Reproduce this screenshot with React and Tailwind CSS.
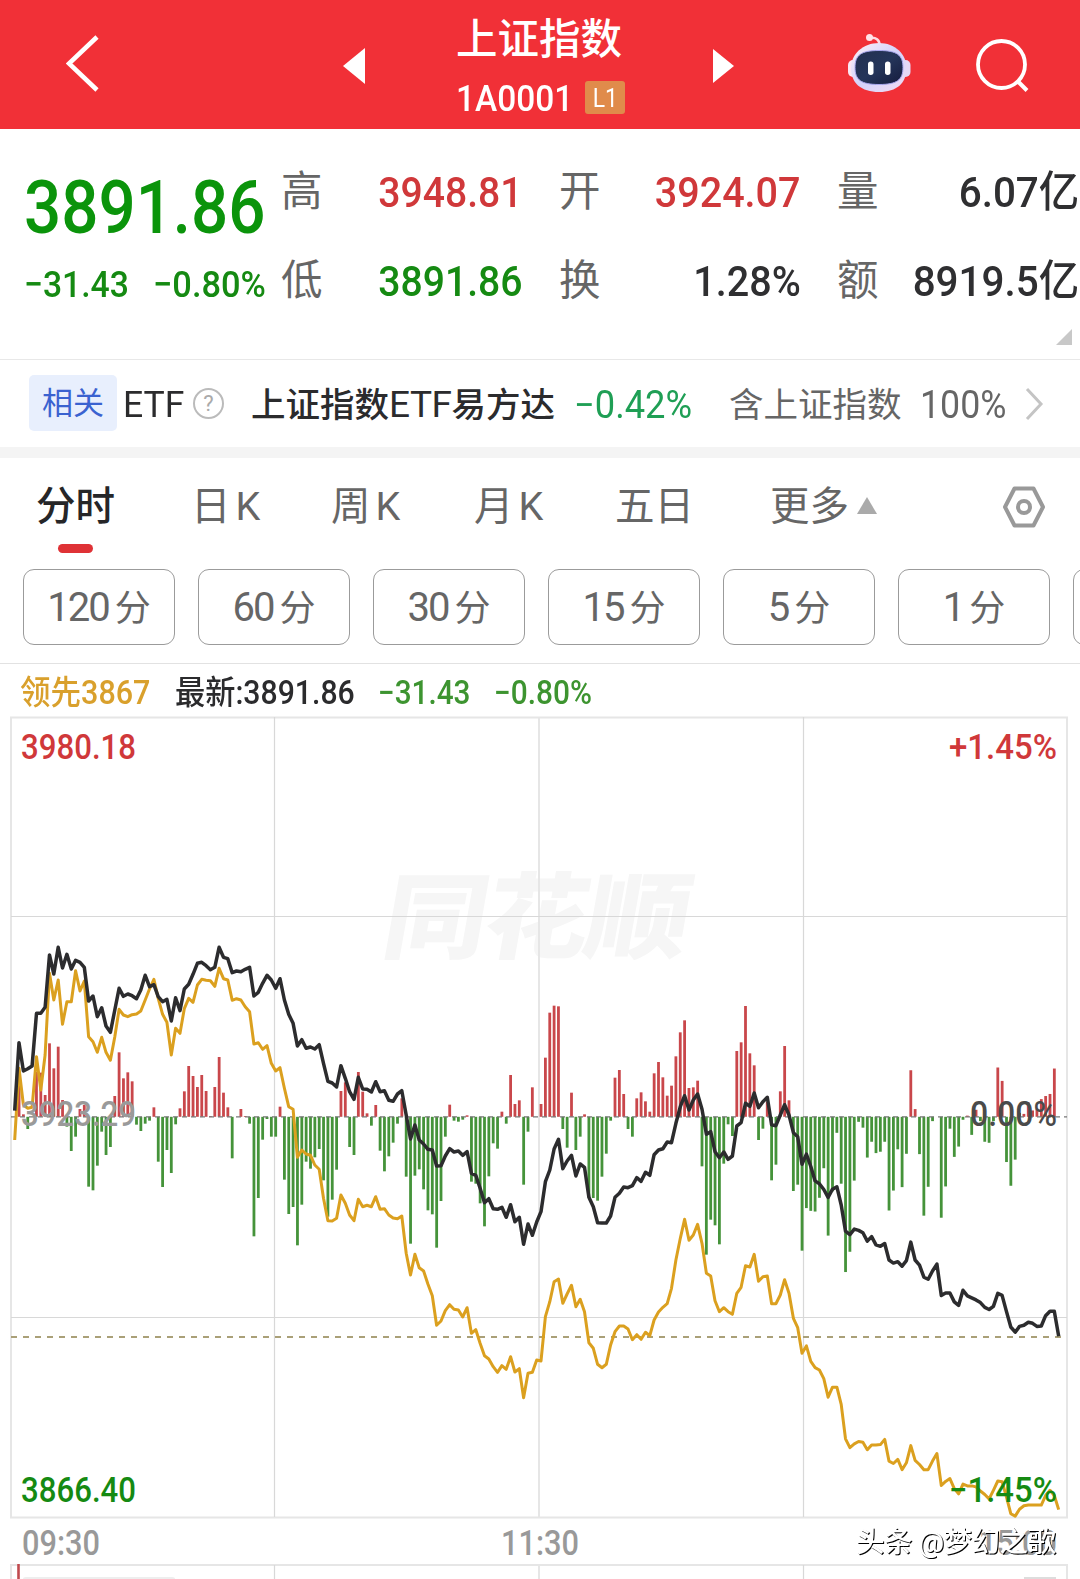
import { useState } from "react";
import clsx from "clsx";

const STEP = 4.35;
const START_X = 14.7;
const ZERO_Y = 1116.8;

// every session block keeps its own origin and resolution
const price = [
  {
    top: 920,
    scale: 3,
    values: [
      572, 368, 453, 446, 438, 280, 280, 262, 105, 162, 82, 144, 103, 147, 121,
      127, 142, 243, 228, 290, 263, 318, 337, 270, 205, 229, 222, 227, 236, 210,
      166, 200, 194, 230, 245, 238, 303, 233, 272, 207, 193, 163, 130, 127, 137,
      149, 142, 82, 112, 116, 158, 153, 155, 148, 142, 228, 217, 190, 166, 180,
      205, 176, 240, 283, 310, 378, 359, 385, 381, 387, 374, 430, 484, 489, 501,
      437, 475, 515, 538, 472, 507, 508, 516, 485, 515, 512, 541, 544, 522, 512,
      585, 657, 615, 660, 672, 688, 690, 738, 737, 708, 686, 696, 693, 706, 695,
      760, 766, 805, 848, 836, 866, 868, 862, 892, 854, 905, 892, 973, 912, 946,
      906,
    ],
  },
  {
    top: 980,
    scale: 3,
    values: [
      695, 605, 570, 507, 478, 566, 543, 526, 588, 552, 562, 652, 680, 728, 729,
      729, 708, 652, 640, 621, 623, 617, 593, 604, 577, 586, 524, 510, 506, 486,
      488, 430, 380, 347, 390, 360, 342, 388, 463, 455, 515, 533, 516, 538, 528,
      438, 428, 370, 379, 339, 383, 365, 352, 434, 437, 405, 374, 405, 458, 470,
      553,
    ],
  },
  {
    top: 1040,
    scale: 2.909,
    values: [
      332, 368, 410, 418, 435, 458, 434, 427, 480, 556, 566, 550, 554, 561, 585,
      572, 596, 600, 592, 640, 649, 645, 658, 642, 588, 640, 655, 690, 696, 672,
      652, 743, 736, 736, 762, 772, 728, 744, 750, 756, 764, 778, 784, 775, 737,
      743, 790, 835, 850, 833, 830, 821, 824, 833, 832, 802, 789, 789, 862,
    ],
  },
];

const leading = [
  {
    top: 920,
    scale: 3,
    values: [
      660, 445, 555, 565, 562, 410, 510, 405, 160, 240, 180, 313, 245, 245, 152,
      213, 183, 350, 365, 397, 352, 397, 421, 350, 268, 285, 290, 284, 282, 273,
      240, 207, 178, 235, 283, 307, 405, 325, 340, 266, 235, 247, 195, 178, 181,
      182, 199, 145, 176, 180, 241, 236, 240, 260, 275, 372, 368, 388, 377, 430,
      453, 443, 505, 560, 568, 712, 690, 702, 706, 735, 748, 835, 902, 903, 895,
      825, 850, 885, 902, 838, 860, 856, 860, 830, 868, 866, 885, 894, 896, 888,
      1000, 1065, 1003, 1043, 1053, 1092, 1127, 1216, 1203, 1172, 1154, 1168,
      1170, 1191, 1163, 1240, 1229, 1270, 1307, 1317, 1340, 1357, 1337, 1348,
      1310, 1356, 1346, 1433, 1360, 1357, 1320,
    ],
  },
  {
    top: 980,
    scale: 3,
    values: [
      1143, 1010, 965, 905, 897, 970, 942, 916, 980, 958, 995, 1088, 1105, 1153,
      1163, 1153, 1095, 1055, 1038, 1038, 1047, 1079, 1064, 1078, 1057, 1067,
      1020, 996, 982, 971, 925, 840, 775, 718, 781, 765, 733, 790, 880, 888, 962,
      995, 983, 995, 1003, 940, 922, 857, 861, 823, 904, 890, 888, 971, 971, 945,
      899, 940, 1015, 1043, 1120,
    ],
  },
  {
    top: 1040,
    scale: 2.909,
    values: [
      890, 935, 953, 960, 985, 1039, 1010, 1010, 1060, 1160, 1186, 1175, 1168,
      1170, 1192, 1178, 1178, 1177, 1162, 1225, 1232, 1220, 1250, 1230, 1180,
      1223, 1235, 1250, 1250, 1225, 1203, 1296, 1284, 1276, 1305, 1320, 1292,
      1297, 1297, 1300, 1312, 1322, 1335, 1310, 1283, 1285, 1330, 1378, 1385,
      1365, 1355, 1353, 1353, 1353, 1353, 1325, 1310, 1325, 1366,
    ],
  },
];

const momentum = [
  {
    top: 920,
    scale: 3,
    values: [
      590, 480, 583, 627, 590, 455, 458, 525, 370, 445, 380, 540, 620, 693, 650,
      567, 555, 800, 811, 737, 635, 705, 681, 528, 397, 475, 457, 484, 614, 633,
      611, 602, 562, 725, 801, 690, 759, 613, 565, 514, 438, 468, 501, 465, 513,
      588, 501, 411, 518, 562, 715, 590, 567, 588, 611, 949, 834, 659, 597, 650,
      650, 560, 779, 882, 861, 976, 854, 725, 746, 712, 687, 781, 890, 839, 749,
      513, 487, 681, 705, 456, 515, 580, 617, 555, 692, 754, 709, 668, 611, 535,
      770, 971, 767, 748, 808, 871, 883, 983, 843, 650, 554, 602, 605, 599, 586,
      785, 791, 850, 919, 769, 670, 686, 575, 611, 465, 552, 541, 794, 635, 502,
      590,
    ],
  },
  {
    top: 980,
    scale: 3,
    values: [
      372, 233, 98, 77, 79, 447, 503, 338, 510, 470, 403, 653, 654, 662, 590,
      521, 422, 293, 270, 342, 447, 470, 355, 337, 364, 395, 280, 246, 292, 347,
      317, 229, 157, 121, 324, 322, 302, 559, 824, 719, 736, 793, 551, 433, 468,
      213, 187, 78, 220, 256, 480, 446, 365, 601, 554, 334, 198, 361, 633, 614,
      812,
    ],
  },
  {
    top: 1040,
    scale: 2.909,
    values: [
      489, 497, 499, 459, 373, 569, 440, 270, 418, 675, 616, 409, 238, 255, 342,
      296, 329, 325, 296, 496, 438, 318, 428, 331, 88, 201, 332, 511, 427, 236,
      224, 517, 426, 258, 340, 310, 232, 220, 276, 203, 236, 296, 299, 236, 80,
      119, 355, 424, 348, 212, 215, 181, 205, 200, 172, 163, 157, 83,
    ],
  },
];

const toPoints = (blocks) =>
  blocks
    .flatMap(({ top, scale, values }) => values.map((v) => top + v / scale))
    .map((y, i) => ({ x: START_X + STEP * i, y }));

const toLine = (blocks) =>
  toPoints(blocks)
    .map(({ x, y }) => `${x.toFixed(1)},${y.toFixed(1)}`)
    .join(" ");

const Narrow = ({ className, children }) => (
  <span className={clsx("inline-block whitespace-nowrap", className)}>
    {children}
  </span>
);

const Robot = () => (
  <svg width="64" height="60" viewBox="0 0 64 60" className="ml-[113px] mt-[33px]">
    <defs>
      <linearGradient id="shell" x1="0" y1="0" x2="1" y2="1">
        <stop offset="0" stopColor="#fff1f6" />
        <stop offset="0.5" stopColor="#d3d2fb" />
        <stop offset="1" stopColor="#f3dcf3" />
      </linearGradient>
      <linearGradient id="visor" x1="0" y1="0" x2="1" y2="1">
        <stop offset="0" stopColor="#23304f" />
        <stop offset="0.5" stopColor="#25355a" />
        <stop offset="1" stopColor="#151b3d" />
      </linearGradient>
    </defs>
    <path d="M23 5C29 4 32.500 7 32.500 12" fill="none" stroke="#ffd9e0" strokeWidth="2.600" />
    <circle cx="22.500" cy="4.500" r="3.500" fill="#ffe3e8" />
    <rect x="1" y="27" width="10" height="17" rx="5" fill="#fbe6f2" />
    <rect x="53.500" y="27" width="10" height="17" rx="5" fill="#e5d8f5" />
    <path
      d="M32 10C48 10 59.500 21 59.500 35C59.500 50 50 59 32 59C14 59 4 50 4 35C4 21 16 10 32 10Z"
      fill="url(#shell)"
    />
    <path
      d="M32 17.500C50 17.500 56 22 56 34.500C56 47 50 51.500 32 51.500C14 51.500 8 47 8 34.500C8 22 14 17.500 32 17.500Z"
      fill="url(#visor)"
      stroke="#a9a8ef"
      strokeWidth="1"
    />
    <rect x="21" y="28.500" width="5.500" height="13.500" rx="2.700" fill="#fff" />
    <rect x="38" y="28.500" width="5.500" height="13.500" rx="2.700" fill="#fff" />
  </svg>
);

const Header = () => (
  <header className="h-[129px] flex items-start bg-[#f13037] text-white">
    <svg width="34" height="60" viewBox="0 0 34 60" className="ml-[66px] mt-[34px]">
      <path d="M31 3L3 29.500L31 56" fill="none" stroke="#fff" strokeWidth="4.600" />
    </svg>
    <svg width="22" height="36" viewBox="0 0 22 36" className="ml-[243px] mt-[48px]">
      <path d="M22 0V36L0 18Z" fill="#fff" />
    </svg>
    <div className="ml-[91px] mt-[16px] w-[169px]">
      <h1 className="text-[41.500px] leading-[48px] font-medium whitespace-nowrap">上证指数</h1>
      <div className="flex mt-[17px]">
        <div className="w-[129px]">
          <Narrow className="text-[36px] leading-[36px] font-medium origin-left scale-x-[.93]">
            1A0001
          </Narrow>
        </div>
        <span className="w-[40px] h-[33px] rounded-[3px] bg-[#e08b4b] text-center text-[26px] leading-[34px]">
          <Narrow className="scale-x-[.88]">L1</Narrow>
        </span>
      </div>
    </div>
    <svg width="21" height="34" viewBox="0 0 21 34" className="ml-[88px] mt-[49px]">
      <path d="M0 0V34L21 17Z" fill="#fff" />
    </svg>
    <Robot />
    <svg width="56" height="56" viewBox="0 0 56 56" className="ml-[64px] mt-[38px]">
      <circle cx="26.500" cy="26.500" r="23.500" fill="none" stroke="#fff" strokeWidth="3.800" />
      <path d="M42.500 43L52 52.500" stroke="#fff" strokeWidth="4" />
    </svg>
  </header>
);

const stats = [
  { label: "高", value: "3948.81", color: "text-[#d0383a]", fit: "scale-x-[.91]" },
  { label: "开", value: "3924.07", color: "text-[#d0383a]", fit: "scale-x-[.92]" },
  { label: "量", value: "6.07亿", color: "text-[#2f2f31]", fit: "scale-x-[.94]" },
  { label: "低", value: "3891.86", color: "text-[#158a12]", fit: "scale-x-[.91]" },
  { label: "换", value: "1.28%", color: "text-[#2f2f31]", fit: "scale-x-[.92]" },
  { label: "额", value: "8919.5亿", color: "text-[#2f2f31]", fit: "scale-x-[.94]" },
];

const Quote = () => (
  <section className="relative h-[230px] flex pt-[41px]">
    <div className="w-[281px] pl-[24px] text-[#0b940b]">
      <Narrow className="block h-[75px] text-[75px] leading-[74px] font-medium origin-left scale-x-[.873]">
        3891.86
      </Narrow>
      <div className="flex mt-[21px] text-[37px] leading-[37px] font-medium text-[#158a12]">
        <div className="w-[129px]">
          <Narrow className="origin-left scale-x-[.91]">−31.43</Narrow>
        </div>
        <Narrow className="origin-left scale-x-[.93]">−0.80%</Narrow>
      </div>
    </div>
    <div className="grid grid-cols-[242px_242px_242px] gap-x-[36px] gap-y-[45px] content-start">
      {stats.map(({ label, value, color, fit }) => (
        <div key={label} className="h-[44px] flex justify-between leading-[44px]">
          <span className="text-[41.500px] text-[#666]">{label}</span>
          <Narrow className={clsx("text-[43px] font-medium origin-right", fit, color)}>
            {value}
          </Narrow>
        </div>
      ))}
    </div>
    <svg width="16" height="16" viewBox="0 0 16 16" className="absolute right-[8px] bottom-[14px]">
      <path d="M16 0V16H0Z" fill="#c8c8c8" />
    </svg>
  </section>
);

const RelatedFund = () => (
  <section className="h-[88px] flex items-center border-t border-[#e8e8e8] text-[34.500px] leading-[44px] text-[#2b2b2d]">
    <span className="ml-[29px] w-[88px] h-[56px] rounded-[5px] bg-[#e8effd] text-center text-[31px] leading-[57px] text-[#3a62d0] -mt-[2px]">
      相关
    </span>
    <div className="ml-[6px] w-[70px] pt-[3px]">
      <Narrow className="text-[37px] origin-left scale-x-[.96]">ETF</Narrow>
    </div>
    <span className="w-[31px] h-[31px] rounded-full border-2 border-[#bbb] text-center text-[22px] leading-[28px] text-[#aaa]">
      ?
    </span>
    <div className="ml-[27px] w-[323px] pt-[3px] whitespace-nowrap font-medium">
      上证指数
      <Narrow className="text-[37px] font-normal tracking-[-.5px]">ETF</Narrow>
      易方达
    </div>
    <div className="w-[155px] pt-[3px]">
      <Narrow className="text-[38px] origin-left scale-x-[.955] text-[#1f9f55]">−0.42%</Narrow>
    </div>
    <div className="w-[191px] pt-[2px] whitespace-nowrap text-[#666]">含上证指数</div>
    <div className="w-[105px] pt-[3px]">
      <Narrow className="text-[38px] origin-left scale-x-[.94] text-[#666]">100%</Narrow>
    </div>
    <svg width="19" height="34" viewBox="0 0 19 34">
      <path d="M2 2L16 17L2 32" fill="none" stroke="#c4c4c4" strokeWidth="3" />
    </svg>
  </section>
);

const tabs = [
  { name: "分时", width: "w-[155px]" },
  { name: "日K", width: "w-[140px]" },
  { name: "周K", width: "w-[143px]" },
  { name: "月K", width: "w-[141px]" },
  { name: "五日", width: "w-[155px]" },
  { name: "更多", width: "w-[87px]" },
];

const Tabs = () => {
  const [active, setActive] = useState("分时");

  return (
    <nav className="h-[94px] flex items-center pl-[36px] text-[39.500px] leading-[50px]">
      {tabs.map(({ name, width }) => (
        <button
          key={name}
          onClick={() => setActive(name)}
          className={clsx(
            "relative pt-[3px] text-left whitespace-nowrap",
            width,
            active === name ? "text-[#262628] font-medium" : "text-[#666]"
          )}
        >
          {name.replace("K", "")}
          {name.endsWith("K") && <span className="ml-[5px]">K</span>}
          {active === name && (
            <span className="absolute left-[22px] top-[65px] w-[35px] h-[9px] rounded-full bg-[#df3236]" />
          )}
        </button>
      ))}
      <svg width="20" height="17" viewBox="0 0 20 17">
        <path d="M10 0L20 17H0Z" fill="#aaa" />
      </svg>
      <svg width="44" height="42" viewBox="0 0 44 42" className="ml-[125px] mt-[3px]">
        <path
          d="M12.500 2.500H31.500L41 21L31.500 39.500H12.500L3 21Z"
          fill="none"
          stroke="#999"
          strokeWidth="4"
          strokeLinejoin="round"
        />
        <circle cx="22" cy="21" r="6" fill="none" stroke="#999" strokeWidth="4" />
      </svg>
    </nav>
  );
};

const Periods = () => (
  <div className="h-[111px] flex gap-[23px] pt-[17px] pl-[23px] overflow-hidden">
    {["120", "60", "30", "15", "5", "1", ""].map((n) => (
      <button
        key={n}
        className="shrink-0 w-[152px] h-[76px] flex justify-center items-baseline rounded-[11px] border-[1.500px] border-[#9b9b9b] text-[#666] leading-[76px]"
      >
        {n && (
          <>
            <Narrow className="text-[40px] tracking-[-2px]">{n}</Narrow>
            <span className="ml-[6px] text-[36px]">分</span>
          </>
        )}
      </button>
    ))}
  </div>
);

const Summary = () => (
  <div className="h-[49px] flex items-center border-t border-[#e2e2e2] pl-[20px] pt-[9px] text-[33px] leading-[40px]">
    <div className="w-[155px]">
      <Narrow className="font-medium origin-left scale-x-[.925] text-[#d9a02c]">领先3867</Narrow>
    </div>
    <div className="w-[203px]">
      <Narrow className="font-medium origin-left scale-x-[.915] text-[#2b2b2d]">最新:3891.86</Narrow>
    </div>
    <div className="w-[116px]">
      <Narrow className="font-medium origin-left scale-x-[.9] text-[#3d9430]">−31.43</Narrow>
    </div>
    <Narrow className="font-medium origin-left scale-x-[.905] text-[#3d9430]">−0.80%</Narrow>
  </div>
);

const Chart = () => {
  const bars = toPoints(momentum).filter(({ y }) => Math.abs(y - ZERO_Y) > 0.4);

  return (
    <svg
      width="1080"
      height="867"
      viewBox="0 712 1080 867"
      className="block"
      fontSize="35"
      fontWeight="500"
    >
      <text
        transform="translate(379 951) skewX(-10) scale(1 .9)"
        fontSize="104"
        fontWeight="900"
        textLength="306"
        fill="#f6f6f6"
      >
        同花顺
      </text>

      <g fill="none" stroke="#e6e6e6" strokeWidth="2">
        <path d="M11 717.500H1067V1517.500H11Z" />
        <path d="M11 1579V1565H1067V1579M539 717V1517M539 1565V1579" />
      </g>
      <path
        d="M274.500 717V1517M803.500 717V1517M274.500 1565V1579M803.500 1565V1579M11 916.500H1067M11 1317.500H1067"
        stroke="#d8d8d8"
        strokeWidth="1.200"
      />

      {bars.map(({ x, y }) => (
        <rect
          key={x}
          x={x - 1.4}
          y={Math.min(y, ZERO_Y)}
          width="2.800"
          height={Math.abs(y - ZERO_Y)}
          fill={y < ZERO_Y ? "#c9474b" : "#45933a"}
        />
      ))}
      <path d="M11 1116.800H1067" stroke="#777" strokeWidth="1.200" strokeDasharray="5 4" />
      <path d="M11 1337H1067" stroke="#aaa078" strokeWidth="1.800" strokeDasharray="6 6" />

      <polyline
        points={toLine(leading)}
        fill="none"
        stroke="#dba01f"
        strokeWidth="3"
        strokeLinejoin="round"
      />
      <polyline
        points={toLine(price)}
        fill="none"
        stroke="#2c2c2e"
        strokeWidth="3.500"
        strokeLinejoin="round"
      />

      <text x="21" y="1126" textLength="115" lengthAdjust="spacingAndGlyphs" fill="#9a9a9a">3923.29</text>
      <text x="21" y="758.500" textLength="115" lengthAdjust="spacingAndGlyphs" fill="#d0383a">3980.18</text>
      <text x="949" y="758.500" textLength="108" lengthAdjust="spacingAndGlyphs" fill="#d0383a">+1.45%</text>
      <text x="970" y="1126" textLength="87" lengthAdjust="spacingAndGlyphs" fill="#4a4a4a">0.00%</text>
      <text x="21" y="1502" textLength="115" lengthAdjust="spacingAndGlyphs" fill="#158a12">3866.40</text>
      <text x="949" y="1502" textLength="108" lengthAdjust="spacingAndGlyphs" fill="#158a12">−1.45%</text>

      <g fill="#999">
        <text x="22" y="1555" textLength="78" lengthAdjust="spacingAndGlyphs">09:30</text>
        <text x="501" y="1555" textLength="78" lengthAdjust="spacingAndGlyphs">11:30</text>
        <text x="979" y="1555" textLength="78" lengthAdjust="spacingAndGlyphs">15:00</text>
      </g>

      <path d="M18.500 1564V1579" stroke="#c04a4e" strokeWidth="2.600" />
      <path d="M23 1579Q23 1577 26 1577H172Q175 1577 175 1579Z" fill="#eee" />
      <path d="M1024 1577H1056V1579H1024Z" fill="#ddd" />

      {/* author signature */}
      <text
        x="856"
        y="1552"
        fontSize="28.500"
        textLength="200"
        fill="#fff"
        className="drop-shadow-[1.5px_1.5px_0_#000]"
      >
        头条 @梦幻之歌
      </text>
    </svg>
  );
};

const App = () => {
  return (
    <main className="w-[1080px] h-[1579px] overflow-hidden bg-white font-[Roboto,'Noto_Sans_CJK_SC',sans-serif]">
      <Header />
      <Quote />
      <RelatedFund />
      <div className="h-[11px] bg-[#f4f4f4]" />
      <Tabs />
      <Periods />
      <Summary />
      <Chart />
    </main>
  );
};

export default App;
